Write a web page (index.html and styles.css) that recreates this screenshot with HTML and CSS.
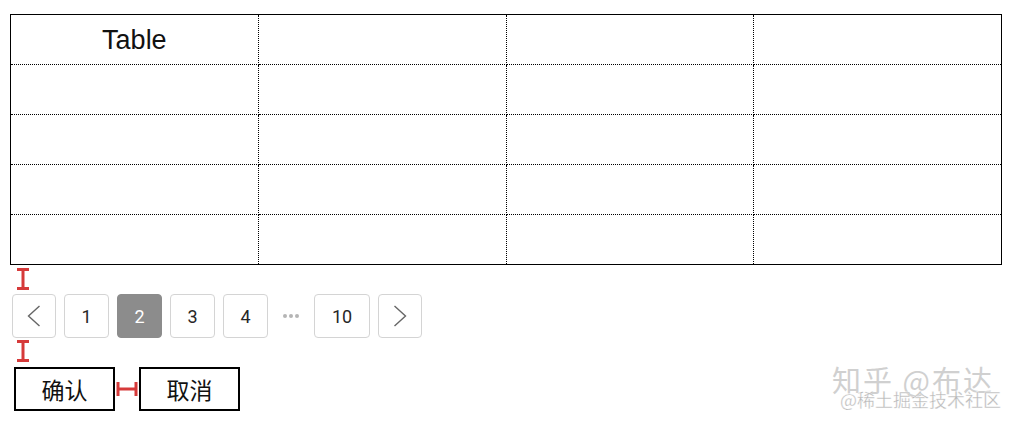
FILE: index.html
```html
<!DOCTYPE html>
<html lang="zh">
<head>
<meta charset="utf-8">
<title>Table</title>
<link rel="stylesheet" href="styles.css">
</head>
<body>
<div class="page">
  <table class="grid">
    <tr><td class="title">Table</td><td></td><td></td><td></td></tr>
    <tr><td></td><td></td><td></td><td></td></tr>
    <tr><td></td><td></td><td></td><td></td></tr>
    <tr><td></td><td></td><td></td><td></td></tr>
    <tr><td></td><td></td><td></td><td></td></tr>
  </table>

  <div class="gap gap-a">
    <svg class="mark-v" width="12" height="22" viewBox="0 0 12 22"><path d="M0 1.5H12M6 1.5V20.5M0 20.5H12" stroke="#d63a3a" stroke-width="3" fill="none"/></svg>
  </div>

  <div class="pager">
    <button class="pg arrow"><svg width="14" height="22" viewBox="0 0 14 22"><path d="M12.5 1L1.5 11L12.5 21" stroke="#666" stroke-width="1.4" fill="none"/></svg></button>
    <button class="pg">1</button>
    <button class="pg active">2</button>
    <button class="pg">3</button>
    <button class="pg">4</button>
    <span class="dots"><i></i><i></i><i></i></span>
    <button class="pg wide">10</button>
    <button class="pg arrow"><svg width="14" height="22" viewBox="0 0 14 22"><path d="M1.5 1L12.5 11L1.5 21" stroke="#666" stroke-width="1.4" fill="none"/></svg></button>
  </div>

  <div class="gap gap-b">
    <svg class="mark-v" width="12" height="22" viewBox="0 0 12 22"><path d="M0 1.5H12M6 1.5V20.5M0 20.5H12" stroke="#d63a3a" stroke-width="3" fill="none"/></svg>
  </div>

  <div class="actions">
    <button class="btn">确认</button>
    <svg class="mark-h" width="24" height="14" viewBox="0 0 24 14"><path d="M3 0V14M3 7H21M21 0V14" stroke="#d63a3a" stroke-width="3" fill="none"/></svg>
    <button class="btn">取消</button>
  </div>
</div>

<div class="watermark">
  <div class="wm1">知乎 @布达</div>
  <div class="wm2">@稀土掘金技术社区</div>
</div>
</body>
</html>
```

FILE: styles.css
```css
html, body {
  margin: 0;
  padding: 0;
  background: #fff;
}
body {
  width: 1014px;
  height: 424px;
  position: relative;
  overflow: hidden;
  font-family: "Liberation Sans", Arial, sans-serif;
}
.page {
  padding: 14px 0 0 10px;
}
.grid {
  border-collapse: collapse;
  width: 992px;
  border: 1px solid #000;
  table-layout: fixed;
}
.grid td {
  height: 49px;
  padding: 0;
  border: 1px dotted #000;
}
.grid .title {
  text-align: center;
  font-size: 27px;
  color: #111;
  padding-top: 2px;
  height: 46px;
}
.gap {
  box-sizing: border-box;
  height: 29px;
}
.gap-a {
  padding-top: 3px;
}
.gap-b {
  padding-top: 2px;
}
.mark-v {
  display: block;
  margin-left: 7px;
}
.pager {
  display: flex;
  align-items: center;
  gap: 8px;
  margin-left: 2px;
}
.pg {
  box-sizing: border-box;
  height: 44px;
  width: 45px;
  margin: 0;
  padding: 0;
  border: 1px solid #d4d4d4;
  border-radius: 4px;
  background: #fff;
  font-family: Roboto, "Liberation Sans", sans-serif;
  font-size: 18px;
  color: #262626;
  display: flex;
  align-items: center;
  justify-content: center;
}
.pg.arrow {
  width: 44px;
}
.pg.wide {
  width: 56px;
}
.pg.active {
  background: #8c8c8c;
  border-color: #8c8c8c;
  color: #fff;
}
.dots {
  width: 30px;
  display: flex;
  justify-content: center;
  gap: 2px;
}
.dots i {
  width: 4px;
  height: 4px;
  border-radius: 50%;
  background: #b5b5b5;
}
.actions {
  display: flex;
  align-items: center;
  margin-left: 4px;
}
.btn {
  box-sizing: border-box;
  width: 101px;
  height: 44px;
  margin: 0;
  border: 2px solid #000;
  background: #fff;
  font-family: "Noto Sans CJK SC", sans-serif;
  font-size: 23px;
  color: #111;
  padding: 0;
}
.mark-h {
  display: block;
}
.watermark {
  position: absolute;
  left: 832px;
  top: 361px;
  font-family: "Noto Sans CJK SC", sans-serif;
  color: #d0d0d0;
}
.wm1 {
  font-size: 29px;
  line-height: 36px;
  letter-spacing: 2px;
  white-space: nowrap;
}
.wm2 {
  position: absolute;
  left: 8px;
  top: 27px;
  font-size: 18px;
  line-height: 22px;
  white-space: nowrap;
  color: #b8b8b8;
  -webkit-text-stroke: 0.3px #fff;
}
```
